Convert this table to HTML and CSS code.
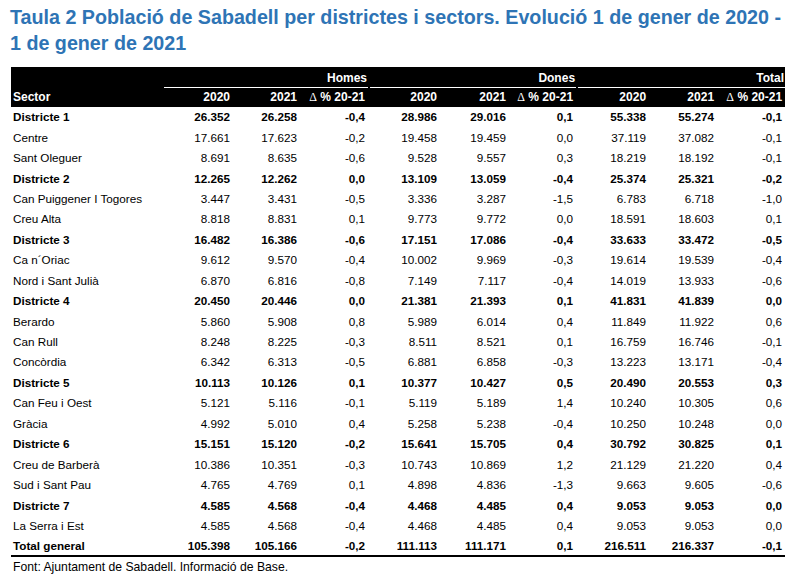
FILE: index.html
```html
<!DOCTYPE html>
<html lang="ca">
<head>
<meta charset="utf-8">
<title>Taula 2 Població de Sabadell</title>
<link rel="stylesheet" href="styles.css">
</head>
<body>
<div class="page">
  <h1 class="title">Taula 2 Població de Sabadell per districtes i sectors. Evolució 1 de gener de 2020 - 1 de gener de 2021</h1>
  <table class="data">
    <colgroup>
      <col class="c0"><col class="c1"><col class="c2"><col class="c3"><col class="c4"><col class="c5"><col class="c6"><col class="c7"><col class="c8"><col class="c9">
    </colgroup>
    <thead>
      <tr class="groups">
        <th></th>
        <th colspan="3"><div class="grp">Homes</div></th>
        <th colspan="3"><div class="grp">Dones</div></th>
        <th colspan="3"><div class="grp">Total</div></th>
      </tr>
      <tr class="cols">
        <th class="lbl">Sector</th>
        <th>2020</th><th>2021</th><th><span class="delta">Δ</span> % 20-21</th>
        <th>2020</th><th>2021</th><th><span class="delta">Δ</span> % 20-21</th>
        <th>2020</th><th>2021</th><th><span class="delta">Δ</span> % 20-21</th>
      </tr>
    </thead>
    <tbody>
      <tr class="dist"><td>Districte 1</td><td>26.352</td><td>26.258</td><td>-0,4</td><td>28.986</td><td>29.016</td><td>0,1</td><td>55.338</td><td>55.274</td><td>-0,1</td></tr>
      <tr><td>Centre</td><td>17.661</td><td>17.623</td><td>-0,2</td><td>19.458</td><td>19.459</td><td>0,0</td><td>37.119</td><td>37.082</td><td>-0,1</td></tr>
      <tr><td>Sant Oleguer</td><td>8.691</td><td>8.635</td><td>-0,6</td><td>9.528</td><td>9.557</td><td>0,3</td><td>18.219</td><td>18.192</td><td>-0,1</td></tr>
      <tr class="dist"><td>Districte 2</td><td>12.265</td><td>12.262</td><td>0,0</td><td>13.109</td><td>13.059</td><td>-0,4</td><td>25.374</td><td>25.321</td><td>-0,2</td></tr>
      <tr><td>Can Puiggener I Togores</td><td>3.447</td><td>3.431</td><td>-0,5</td><td>3.336</td><td>3.287</td><td>-1,5</td><td>6.783</td><td>6.718</td><td>-1,0</td></tr>
      <tr><td>Creu Alta</td><td>8.818</td><td>8.831</td><td>0,1</td><td>9.773</td><td>9.772</td><td>0,0</td><td>18.591</td><td>18.603</td><td>0,1</td></tr>
      <tr class="dist"><td>Districte 3</td><td>16.482</td><td>16.386</td><td>-0,6</td><td>17.151</td><td>17.086</td><td>-0,4</td><td>33.633</td><td>33.472</td><td>-0,5</td></tr>
      <tr><td>Ca n´Oriac</td><td>9.612</td><td>9.570</td><td>-0,4</td><td>10.002</td><td>9.969</td><td>-0,3</td><td>19.614</td><td>19.539</td><td>-0,4</td></tr>
      <tr><td>Nord i Sant Julià</td><td>6.870</td><td>6.816</td><td>-0,8</td><td>7.149</td><td>7.117</td><td>-0,4</td><td>14.019</td><td>13.933</td><td>-0,6</td></tr>
      <tr class="dist"><td>Districte 4</td><td>20.450</td><td>20.446</td><td>0,0</td><td>21.381</td><td>21.393</td><td>0,1</td><td>41.831</td><td>41.839</td><td>0,0</td></tr>
      <tr><td>Berardo</td><td>5.860</td><td>5.908</td><td>0,8</td><td>5.989</td><td>6.014</td><td>0,4</td><td>11.849</td><td>11.922</td><td>0,6</td></tr>
      <tr><td>Can Rull</td><td>8.248</td><td>8.225</td><td>-0,3</td><td>8.511</td><td>8.521</td><td>0,1</td><td>16.759</td><td>16.746</td><td>-0,1</td></tr>
      <tr><td>Concòrdia</td><td>6.342</td><td>6.313</td><td>-0,5</td><td>6.881</td><td>6.858</td><td>-0,3</td><td>13.223</td><td>13.171</td><td>-0,4</td></tr>
      <tr class="dist"><td>Districte 5</td><td>10.113</td><td>10.126</td><td>0,1</td><td>10.377</td><td>10.427</td><td>0,5</td><td>20.490</td><td>20.553</td><td>0,3</td></tr>
      <tr><td>Can Feu i Oest</td><td>5.121</td><td>5.116</td><td>-0,1</td><td>5.119</td><td>5.189</td><td>1,4</td><td>10.240</td><td>10.305</td><td>0,6</td></tr>
      <tr><td>Gràcia</td><td>4.992</td><td>5.010</td><td>0,4</td><td>5.258</td><td>5.238</td><td>-0,4</td><td>10.250</td><td>10.248</td><td>0,0</td></tr>
      <tr class="dist"><td>Districte 6</td><td>15.151</td><td>15.120</td><td>-0,2</td><td>15.641</td><td>15.705</td><td>0,4</td><td>30.792</td><td>30.825</td><td>0,1</td></tr>
      <tr><td>Creu de Barberà</td><td>10.386</td><td>10.351</td><td>-0,3</td><td>10.743</td><td>10.869</td><td>1,2</td><td>21.129</td><td>21.220</td><td>0,4</td></tr>
      <tr><td>Sud i Sant Pau</td><td>4.765</td><td>4.769</td><td>0,1</td><td>4.898</td><td>4.836</td><td>-1,3</td><td>9.663</td><td>9.605</td><td>-0,6</td></tr>
      <tr class="dist"><td>Districte 7</td><td>4.585</td><td>4.568</td><td>-0,4</td><td>4.468</td><td>4.485</td><td>0,4</td><td>9.053</td><td>9.053</td><td>0,0</td></tr>
      <tr><td>La Serra i Est</td><td>4.585</td><td>4.568</td><td>-0,4</td><td>4.468</td><td>4.485</td><td>0,4</td><td>9.053</td><td>9.053</td><td>0,0</td></tr>
      <tr class="dist total"><td>Total general</td><td>105.398</td><td>105.166</td><td>-0,2</td><td>111.113</td><td>111.171</td><td>0,1</td><td>216.511</td><td>216.337</td><td>-0,1</td></tr>
    </tbody>
  </table>
  <p class="source">Font: Ajuntament de Sabadell. Informació de Base.</p>
</div>
</body>
</html>
```

FILE: styles.css
```css
html, body {
  margin: 0;
  padding: 0;
  background: #fff;
}

.page {
  padding: 4px 0 0 10px;
  font-family: "Liberation Sans", Arial, sans-serif;
  color: #000;
}

.title {
  margin: 0;
  width: 780px;
  font-size: 19.7px;
  line-height: 26px;
  font-weight: bold;
  color: #2e74b5;
}

.data {
  margin: 10.7px 0 0 1px;
  width: 774px;
  table-layout: fixed;
  border-collapse: separate;
  border-spacing: 0;
  font-size: 11.7px;
}

.c0 { width: 151px; }
.c1 { width: 71px; }
.c2 { width: 67px; }
.c3 { width: 68px; }
.c4 { width: 72px; }
.c5 { width: 69px; }
.c6 { width: 67px; }
.c7 { width: 73px; }
.c8 { width: 68px; }
.c9 { width: 68px; }

.data thead {
  background: #000;
  color: #fff;
}

.data th {
  font-size: 12px;
  font-weight: bold;
  padding: 0 3px 0 0;
  text-align: right;
  white-space: nowrap;
}

.groups th {
  padding: 0 0 0 2px;
  vertical-align: top;
}

.grp {
  padding: 4px 1px 2px 0;
  line-height: 14px;
  border-bottom: 1.5px solid #fff;
}

.cols th {
  line-height: 19.5px;
}

.cols th.lbl {
  text-align: left;
  padding-left: 2px;
}

.delta {
  font-family: "Liberation Serif", "Times New Roman", serif;
  font-weight: normal;
  font-size: 12px;
}

.data td {
  padding: 0 3px 0 0;
  line-height: 20.43px;
  text-align: right;
  white-space: nowrap;
}

.data td:first-child {
  text-align: left;
  padding-left: 2px;
}

.dist td {
  font-weight: bold;
}

.total td {
  line-height: 19px;
  border-bottom: 2.6px solid #000;
}

.source {
  margin: 3px 0 0 3px;
  font-size: 12.2px;
  line-height: 14px;
}
```
